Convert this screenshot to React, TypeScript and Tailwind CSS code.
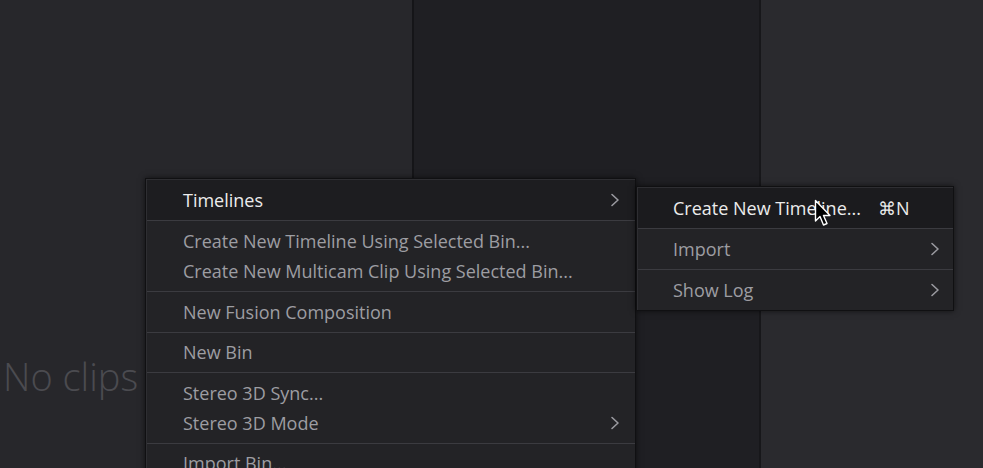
import React from "react";

const font = { fontFamily: '"Open Sans", "Noto Sans", sans-serif' };

function Chevron({ className = "" }: { className?: string }) {
  return (
    <svg width="10" height="16" viewBox="0 0 10 16" className={className}>
      <path d="M2 2.5 L8 8 L2 13.5" fill="none" stroke="currentColor" strokeWidth="1.6" strokeLinecap="round" strokeLinejoin="round" />
    </svg>
  );
}

function Row({ label, active, chevron, h = "h-[30px]" }: { label: string; active?: boolean; chevron?: boolean; h?: string }) {
  return (
    <div className={`flex items-center ${h} pl-[36px] pr-[15px] ${active ? "text-[#ececec]" : "text-[#9d9da2]"}`}>
      <span className="flex-1 whitespace-nowrap">{label}</span>
      {chevron && <Chevron className="text-[#9a9aa0]" />}
    </div>
  );
}

function Sep() {
  return <div className="h-px bg-[#3b3b40]" />;
}

export default function App() {
  return (
    <div className="relative w-[983px] h-[468px] overflow-hidden bg-[#27272b]" style={font}>
      <div className="flex h-full">
        <div className="w-[412px] h-full bg-[#27272b] pt-[350px] pl-[3px]">
          <div className="text-[38px] leading-[52px] text-[#4b4b50] font-light whitespace-nowrap">No clips</div>
        </div>
        <div className="w-[2px] h-full bg-[#151518]" />
        <div className="w-[345px] h-full bg-[#1f1f23]" />
        <div className="w-[2px] h-full bg-[#17171a]" />
        <div className="flex-1 h-full bg-[#2a2a2e]" />
      </div>

      {/* main menu */}
      <div className="absolute left-[145px] top-[178px] w-[491px] h-[300px] bg-[#232326] border border-[#101012] shadow-[0_0_6px_rgba(0,0,0,0.6)] text-[18px]">
        <div className="border-t border-l border-[#2e2e32] h-full">
          <div className="bg-[#1d1d20]">
            <Row label="Timelines" active chevron h="h-[40px]" />
          </div>
          <Sep />
          <div className="py-[5px]">
            <Row label="Create New Timeline Using Selected Bin..." />
            <Row label="Create New Multicam Clip Using Selected Bin..." />
          </div>
          <Sep />
          <Row label="New Fusion Composition" h="h-[40px]" />
          <Sep />
          <Row label="New Bin" h="h-[39px]" />
          <Sep />
          <div className="py-[5px]">
            <Row label="Stereo 3D Sync..." />
            <Row label="Stereo 3D Mode" chevron />
          </div>
          <Sep />
          <Row label="Import Bin..." h="h-[38px]" />
        </div>
      </div>

      {/* submenu */}
      <div className="absolute left-[636px] top-[186px] w-[318px] h-[125px] bg-[#232326] border border-[#101012] shadow-[0_0_6px_rgba(0,0,0,0.6)] text-[18px]">
        <div className="border-t border-l border-[#2e2e32] h-full">
          <div className="bg-[#1b1b1e] flex items-center h-[40px] pl-[35px] pr-[15px] text-[#ececec]">
            <span className="whitespace-nowrap">Create New Timeline...</span>
            <span className="ml-[17px] whitespace-nowrap">⌘N</span>
          </div>
          <Sep />
          <div className="flex items-center h-[40px] pl-[35px] pr-[13px] text-[#9d9da2]">
            <span className="flex-1">Import</span>
            <Chevron className="text-[#9a9aa0]" />
          </div>
          <Sep />
          <div className="flex items-center h-[40px] pl-[35px] pr-[13px] text-[#9d9da2]">
            <span className="flex-1">Show Log</span>
            <Chevron className="text-[#9a9aa0]" />
          </div>
        </div>
      </div>

      {/* cursor */}
      <svg className="absolute left-[814px] top-[199px]" width="18" height="30" viewBox="0 0 18 30">
        <path d="M1.5 1.5 L1.5 22 L6 17.5 L9.5 26 L13 24.5 L9.5 16.5 L16 16.5 Z" fill="#000" stroke="#fff" strokeWidth="1.4" strokeLinejoin="round" />
      </svg>
    </div>
  );
}
